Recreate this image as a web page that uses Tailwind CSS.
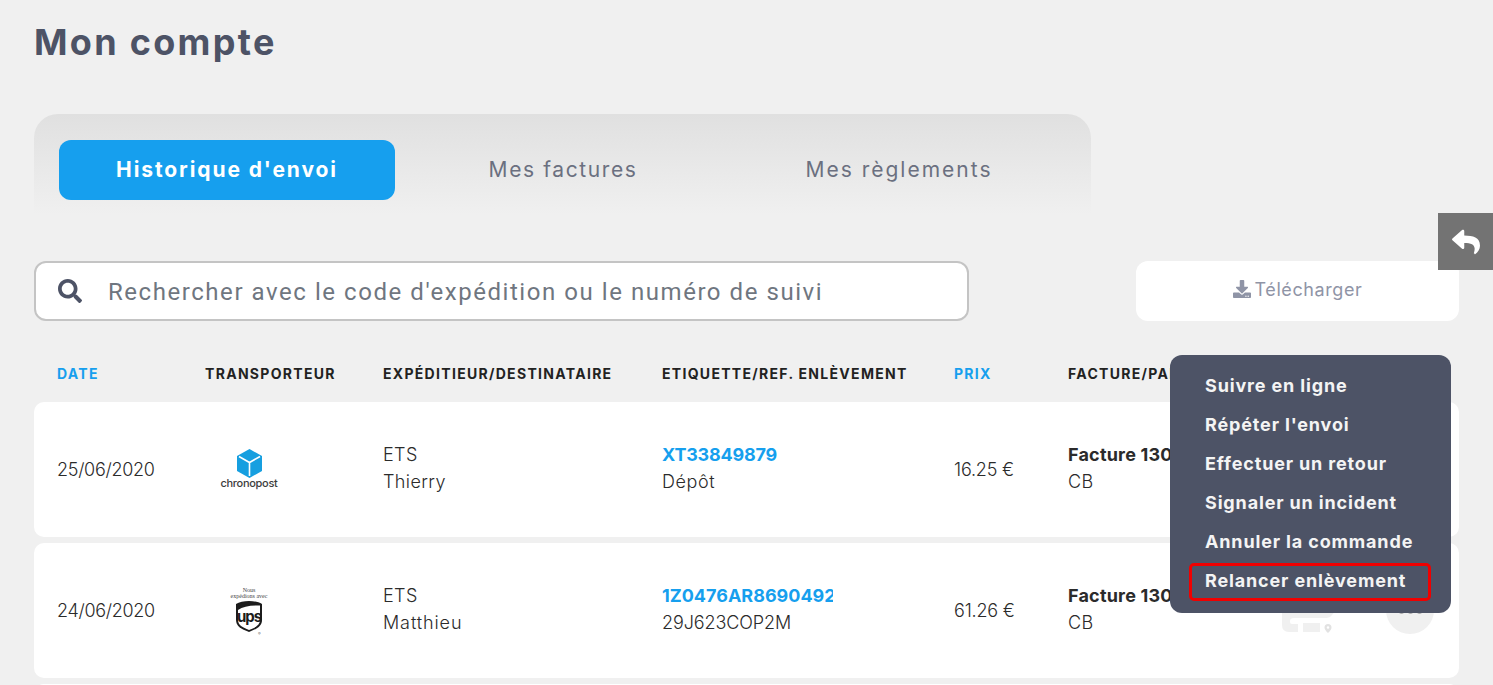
<!DOCTYPE html>
<html lang="fr">
  <head>
    <title>Mon compte</title>
    <meta charset="UTF-8" />
    <script src="https://cdn.jsdelivr.net/npm/@tailwindcss/browser@4"></script>
  </head>
  <body class="relative h-[685px] overflow-hidden bg-[#f0f0f0] font-['Inter','Liberation_Sans',sans-serif]">
    <!-- back button -->
    <button class="absolute top-[213px] right-0 flex h-[57px] w-[55px] items-center justify-center bg-[#737373]">
      <svg class="h-[28px] w-[28px] text-white" viewBox="0 0 512 512" fill="currentColor"><path d="M8.309 189.836L184.313 37.851C199.719 24.546 224 35.347 224 56.015v80.053c160.629 1.839 288 34.032 288 186.258 0 61.441-39.581 122.309-83.333 154.132-13.653 9.931-33.111-2.533-28.077-18.631 45.344-145.012-21.507-183.51-176.59-185.742V360c0 20.7-24.3 31.453-39.687 18.164l-176.004-152c-11.071-9.562-11.086-26.753 0-36.328z"></path></svg>
    </button>

    <main class="w-[1459px] pl-[34px]">
      <h1 class="h-[114px] pt-[18px] text-[36px] leading-[48px] font-bold tracking-[2.3px] text-[#4d5366]">Mon compte</h1>

      <!-- tabs -->
      <div class="flex h-[101px] w-[1057px] items-start rounded-t-[24px] bg-gradient-to-b from-[#e0e0e0] to-[#f0f0f0] pt-[26px] pl-[25px]">
        <a class="flex h-[60px] w-[336px] items-center justify-center rounded-[12px] bg-[#169fee] text-[21px] font-bold tracking-[1.9px] text-white">Historique d'envoi</a>
        <a class="flex h-[60px] w-[336px] items-center justify-center text-[21px] tracking-[1.6px] text-[#6b7080]">Mes factures</a>
        <a class="flex h-[60px] w-[336px] items-center justify-center text-[21px] tracking-[2px] text-[#6b7080]">Mes règlements</a>
      </div>

      <!-- search + download -->
      <div class="mt-[46px] flex h-[60px] justify-between">
        <div class="flex w-[935px] items-center rounded-[12px] border-2 border-[#c4c4c4] bg-white pl-[22px]">
          <svg class="h-[24px] w-[24px] text-[#4d5366]" viewBox="0 0 512 512" fill="currentColor"><path d="M505 442.7L405.3 343c-4.5-4.5-10.6-7-17-7H372c27.6-35.3 44-79.7 44-128C416 93.1 322.9 0 208 0S0 93.1 0 208s93.1 208 208 208c48.3 0 92.7-16.4 128-44v16.3c0 6.4 2.5 12.5 7 17l99.7 99.7c9.4 9.4 24.6 9.4 33.9 0l28.3-28.3c9.4-9.4 9.4-24.6.1-34zM208 336c-70.7 0-128-57.2-128-128 0-70.7 57.2-128 128-128 70.7 0 128 57.2 128 128 0 70.7-57.2 128-128 128z"></path></svg>
          <span class="mt-[2px] ml-[26px] font-['Roboto',sans-serif] text-[24px] tracking-[1.55px] text-[#6f7680]">Rechercher avec le code d'expédition ou le numéro de suivi</span>
        </div>
        <button class="flex w-[323px] items-center justify-center gap-[4px] rounded-[12px] bg-white pb-[4px] text-[18px] tracking-[0.6px] text-[#8f94a6]">
          <svg class="h-[18px] w-[18px]" viewBox="0 0 512 512" fill="currentColor"><path d="M216 0h80c13.3 0 24 10.7 24 24v168h87.7c17.8 0 26.7 21.5 14.1 34.1L269.7 378.3c-7.5 7.5-19.8 7.5-27.3 0L90.1 226.1c-12.6-12.6-3.7-34.1 14.1-34.1H192V24c0-13.3 10.7-24 24-24zm296 376v112c0 13.3-10.7 24-24 24H24c-13.3 0-24-10.7-24-24V376c0-13.3 10.7-24 24-24h146.7l49 49c20.1 20.1 52.5 20.1 72.6 0l49-49H488c13.3 0 24 10.7 24 24zm-124 88c0-11-9-20-20-20s-20 9-20 20 9 20 20 20 20-9 20-20zm64 0c0-11-9-20-20-20s-20 9-20 20 9 20 20 20 20-9 20-20z"></path></svg>
          Télécharger
        </button>
      </div>

      <!-- table head -->
      <div class="mt-[34px] grid h-[47px] grid-cols-[148px_178px_279px_292px_114px_1fr] pt-[9px] pl-[23px] text-[14px] leading-[20px] font-bold tracking-[1.3px] text-[#222]">
        <span class="text-[#169fee]">DATE</span>
        <span>TRANSPORTEUR</span>
        <span>EXPÉDITIEUR/DESTINATAIRE</span>
        <span>ETIQUETTE/REF. ENLÈVEMENT</span>
        <span class="text-[#169fee]">PRIX</span>
        <span class="whitespace-nowrap">FACTURE/PAIEMENT</span>
      </div>

      <!-- rows -->
      <div class="flex flex-col gap-[6px]">
        <div class="grid h-[135px] grid-cols-[148px_178px_279px_292px_114px_1fr] items-center rounded-[10px] bg-white pl-[23px] text-[18px] leading-[27px] font-light text-[#2b2b2b]">
          <span class="mb-[1px] tracking-[-0.3px]">25/06/2020</span>
          <div class="flex w-[88px] flex-col items-center">
            <svg class="h-[29px] w-[25px]" viewBox="0 0 25 29"><path d="M12.5 0L25 7V22L12.5 29L0 22V7Z" fill="#169fe0"></path><path d="M2 7.5L12.5 13.5L23 7.5M12.5 13.500V27" fill="none" stroke="#fff" stroke-width="1.6"></path></svg>
            <span class="mt-[-1px] text-[11px] leading-[13px] font-medium tracking-[-0.3px] text-[#3c3c3c]">chronopost</span>
          </div>
          <div class="mb-[4px]"><p class="tracking-[0.4px]">ETS</p><p class="tracking-[0.4px]">Thierry</p></div>
          <div class="mb-[4px]"><p class="font-bold tracking-[-0.2px] text-[#169fee]">XT33849879</p><p class="tracking-[0.6px]">Dépôt</p></div>
          <span class="mb-[1px] tracking-[-0.2px]">16.25 €</span>
          <div class="mb-[4px]"><p class="font-bold tracking-[0.2px]">Facture 130</p><p class="tracking-[0.4px]">CB</p></div>
        </div>

        <div class="relative grid h-[135px] grid-cols-[148px_178px_279px_292px_114px_1fr] items-center rounded-[10px] bg-white pl-[23px] text-[18px] leading-[27px] font-light text-[#2b2b2b]">
          <span class="mb-[1px] tracking-[-0.3px]">24/06/2020</span>
          <div class="flex w-[88px] flex-col items-center">
            <span class="text-center font-['Liberation_Serif',serif] text-[6px] leading-[6px] whitespace-nowrap text-[#444]">Nous<br />expédions avec</span>
            <svg class="mt-[2px] h-[34px] w-[28px]" viewBox="0 0 28 34"><path d="M14 0C9 0 4 1 1 3V19C1 25 6 28 14 31C22 28 27 25 27 19V3C24 1 19 0 14 0Z" fill="#1c1c1c"></path><path d="M3 9C8 5.500 15 4 25 4.500V19C25 24 20.500 26.500 14 29C7.500 26.500 3 24 3 19Z" fill="#fff"></path><text x="14" y="21" text-anchor="middle" font-size="15" font-weight="700" letter-spacing="-1" fill="#1c1c1c">ups</text><text x="23" y="33.500" font-size="4" fill="#444">®</text></svg>
          </div>
          <div class="mb-[4px]"><p class="tracking-[0.4px]">ETS</p><p class="tracking-[0.9px]">Matthieu</p></div>
          <div class="mb-[4px] w-[171px] overflow-hidden whitespace-nowrap"><p class="font-bold text-[#169fee]">1Z0476AR8690492</p><p class="tracking-[-0.1px]">29J623COP2M</p></div>
          <span class="mb-[1px] tracking-[-0.2px]">61.26 €</span>
          <div class="mb-[4px]"><p class="font-bold tracking-[0.2px]">Facture 130</p><p class="tracking-[0.4px]">CB</p></div>
          <!-- actions under the menu -->
          <svg class="absolute top-[67px] left-[1248px] h-[24px] w-[54px] text-[#f0f0f0]" viewBox="0 0 54 24" fill="currentColor"><path d="M0 0H54L50 5Q48 8 44 8H12Q8 8 8 11V12Q8 14 10 14H16V22H7Q0 22 0 15Z"></path><rect x="21" y="13" width="17" height="9"></rect><path fill-rule="evenodd" d="M46 14a3.500 3.500 0 0 1 3.500 3.500C49.500 20 46 23 46 23S42.500 20 42.500 17.500A3.500 3.500 0 0 1 46 14ZM46 16.200a1.300 1.300 0 1 0 0 2.600 1.300 1.300 0 0 0 0-2.600Z" fill="#e2e2e2"></path></svg>
          <div class="absolute top-[43px] right-[25px] flex h-[48px] w-[48px] items-end justify-center gap-[4px] rounded-full bg-[#f0f0f0] pb-[20px]">
            <span class="h-[5px] w-[5px] rounded-full bg-[#aaaaaa]"></span>
            <span class="h-[5px] w-[5px] rounded-full bg-[#aaaaaa]"></span>
            <span class="h-[5px] w-[5px] rounded-full bg-[#aaaaaa]"></span>
          </div>
        </div>

        <div class="h-[135px] rounded-[10px] bg-white"></div>
      </div>
    </main>

    <!-- actions menu -->
    <ul class="absolute top-[355px] left-[1170px] flex h-[258px] w-[281px] flex-col rounded-[12px] bg-[#4d5366] pt-[11px] pr-[20px] pl-[19px] text-[18px] font-bold tracking-[0.85px] text-[#f4f4f4]">
      <li class="flex h-[39px] shrink-0 items-center px-[16px]">Suivre en ligne</li>
      <li class="flex h-[39px] shrink-0 items-center px-[16px]">Répéter l'envoi</li>
      <li class="flex h-[39px] shrink-0 items-center px-[16px]">Effectuer un retour</li>
      <li class="flex h-[39px] shrink-0 items-center px-[16px]">Signaler un incident</li>
      <li class="flex h-[39px] shrink-0 items-center px-[16px]">Annuler la commande</li>
      <li class="mt-[2px] flex h-[38px] shrink-0 items-center rounded-[5px] border-[3px] border-[#f00000] px-[13px] pb-[4px]">Relancer enlèvement</li>
    </ul>
  </body>
</html>
